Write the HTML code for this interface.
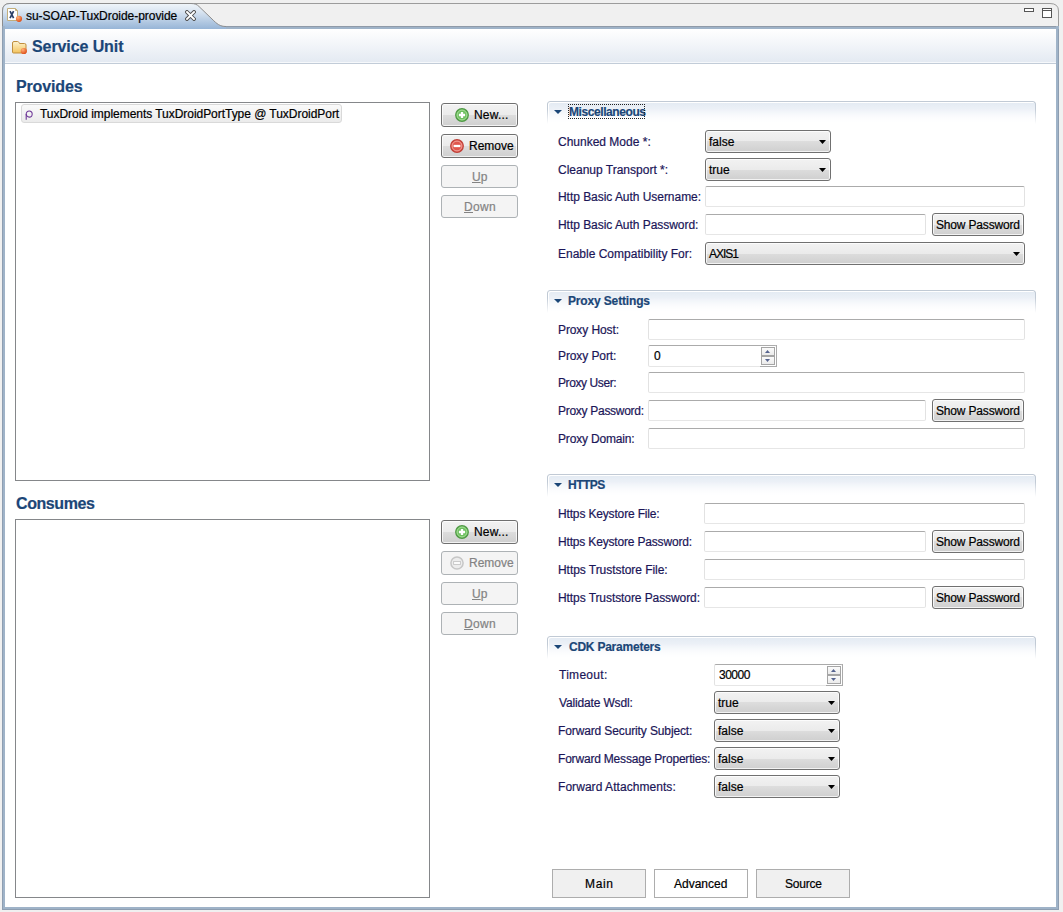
<!DOCTYPE html><html><head><meta charset="utf-8"><style>
html,body{margin:0;padding:0}
body{width:1063px;height:912px;position:relative;overflow:hidden;background:#f0f0f0;font-family:"Liberation Sans",sans-serif}
.t{position:absolute;white-space:nowrap;font-family:"Liberation Sans",sans-serif;-webkit-text-stroke:0.2px currentColor}
</style></head><body>
<div style="position:absolute;left:2px;top:26px;width:1057px;height:884px;box-sizing:border-box;border:3px solid #9fb3c8;background:#fff"></div>
<div style="position:absolute;left:2px;top:29px;width:1px;height:881px;box-sizing:border-box;background:#8e9eb1"></div>
<div style="position:absolute;left:1058px;top:29px;width:1px;height:881px;box-sizing:border-box;background:#8e9eb1"></div>
<div style="position:absolute;left:2px;top:909px;width:1057px;height:1px;box-sizing:border-box;background:#8e9eb1"></div>
<svg style="position:absolute;left:0;top:0" width="1063" height="30">
<defs><linearGradient id="tg" x1="0" y1="0" x2="0" y2="1"><stop offset="0" stop-color="#f0f5fa"/><stop offset="0.3" stop-color="#dbe6f2"/><stop offset="1" stop-color="#97b5d7"/></linearGradient></defs>
<path d="M2.5,26.5V11Q2.5,3.5 10,3.5H1050Q1058.5,3.5 1058.5,11V26.5" fill="#f0f0f0" stroke="#9c9c9c" stroke-width="1"/>
<path d="M2.5,29V11Q2.5,3.5 10,3.5H191C195,3.5 197,4.5 199,6.5L212,19C217,24 220,26.5 226,26.5V29Z" fill="url(#tg)"/>
<path d="M2.5,26V11Q2.5,3.5 10,3.5H191C195,3.5 197,4.5 199,6.5L212,19C217,24 220,26.5 226,26.5" fill="none" stroke="#8d8d8d" stroke-width="1"/>
<path d="M226,26.5H1058" stroke="#8f9aa8" stroke-width="1"/>
</svg>
<div style="position:absolute;left:2px;top:26px;width:3px;height:3px;box-sizing:border-box;background:#9fb3c8"></div>
<div style="position:absolute;left:2px;top:26px;width:1px;height:3px;box-sizing:border-box;background:#8e9eb1"></div>
<div style="position:absolute;left:1056px;top:26px;width:3px;height:3px;box-sizing:border-box;background:#9fb3c8"></div>
<svg style="position:absolute;left:6px;top:7px" width="18" height="17">
<defs><radialGradient id="od1" cx="0.35" cy="0.3" r="0.75"><stop offset="0" stop-color="#ffb27a"/><stop offset="1" stop-color="#dd4a14"/></radialGradient></defs>
<path d="M1.5,1.5H9.5L11.5,3.5V13.5H1.5Z" fill="#fff" stroke="#c2ae7c"/>
<path d="M9.5,1.5V3.5H11.5" fill="none" stroke="#c2ae7c"/>
<path d="M4,4.2L7.6,11.2M7.6,4.2L4,11.2" stroke="#2b3f68" stroke-width="1.7"/>
<circle cx="13" cy="11.8" r="3.1" fill="url(#od1)"/>
</svg>
<div class="t" style="left:26px;top:10px;font-size:12px;line-height:12px;font-weight:400;color:#000;letter-spacing:-0.042px;">su-SOAP-TuxDroide-provide</div>
<svg style="position:absolute;left:185px;top:10px" width="11" height="11">
<path d="M2,2L9,9M9,2L2,9" stroke="#505050" stroke-width="3.8" stroke-linecap="square"/>
<path d="M2,2L9,9M9,2L2,9" stroke="#fff" stroke-width="1.9" stroke-linecap="square"/>
</svg>
<div style="position:absolute;left:1024px;top:8px;width:10px;height:4px;box-sizing:border-box;border:1px solid #555;background:#fff"></div>
<svg style="position:absolute;left:1041px;top:7px" width="13" height="12">
<rect x="1.5" y="1.5" width="9" height="9" fill="#fff" stroke="#555" stroke-width="1"/>
<line x1="1.5" y1="3.5" x2="10.5" y2="3.5" stroke="#555" stroke-width="1"/>
</svg>
<div style="position:absolute;left:5px;top:29px;width:1051px;height:33px;box-sizing:border-box;background:linear-gradient(#ffffff,#e4eaf2)"></div>
<div style="position:absolute;left:5px;top:62px;width:1051px;height:1px;box-sizing:border-box;background:#f6f8fb"></div>
<div style="position:absolute;left:5px;top:63px;width:1051px;height:1px;box-sizing:border-box;background:#c2ccd8"></div>
<svg style="position:absolute;left:11px;top:40px" width="18" height="16">
<defs><linearGradient id="fg" x1="0" y1="0" x2="0" y2="1"><stop offset="0" stop-color="#fdf3cf"/><stop offset="1" stop-color="#f3c35c"/></linearGradient>
<radialGradient id="od2" cx="0.35" cy="0.3" r="0.75"><stop offset="0" stop-color="#ffb27a"/><stop offset="1" stop-color="#dd4a14"/></radialGradient></defs>
<path d="M1.5,3Q1.5,1.5 3,1.5H6.5Q7.5,1.5 8,2.5L8.5,3.5H13.5Q15,3.5 15,5V12Q15,13 14,13H2.5Q1.5,13 1.5,12Z" fill="url(#fg)" stroke="#bf8e3f"/>
<circle cx="12.8" cy="11" r="3.1" fill="url(#od2)"/>
</svg>
<div class="t" style="left:32px;top:39px;font-size:16px;line-height:16px;font-weight:700;color:#1b4677;letter-spacing:-0.091px;">Service Unit</div>
<div class="t" style="left:16px;top:79px;font-size:16px;line-height:16px;font-weight:700;color:#1b4677;letter-spacing:-0.143px;">Provides</div>
<div style="position:absolute;left:15px;top:102px;width:415px;height:379px;box-sizing:border-box;border:1px solid #85878a;background:#fff"></div>
<div style="position:absolute;left:21px;top:104px;width:321px;height:19px;box-sizing:border-box;border:1px solid #d9d9d9;border-radius:3px;background:linear-gradient(#fafafa,#ebebeb)"></div>
<svg style="position:absolute;left:24px;top:109px" width="11" height="12"><ellipse cx="5.2" cy="5" rx="3" ry="3.1" fill="none" stroke="#6e3798" stroke-width="1.05"/><path d="M2.2,5V10.8" stroke="#6e3798" stroke-width="1.1"/></svg>
<div class="t" style="left:40px;top:108px;font-size:12px;line-height:12px;font-weight:400;color:#000;letter-spacing:-0.040px;">TuxDroid implements TuxDroidPortType @ TuxDroidPort</div>
<div style="position:absolute;left:441px;top:103px;width:77px;height:24px;box-sizing:border-box;background:linear-gradient(#f2f2f2 0%,#ebebeb 50%,#dddddd 50%,#cfcfcf 100%);border:1px solid #707070;border-radius:3px;box-shadow:inset 0 0 0 1px rgba(255,255,255,0.75)"></div>
<svg style="position:absolute;left:455px;top:108px" width="15" height="15">
<circle cx="7" cy="7" r="6.3" fill="#6dbf5f" stroke="#4f9845" stroke-width="1.2"/>
<circle cx="7" cy="7" r="4.9" fill="none" stroke="#a6df97" stroke-width="1"/>
<path d="M7,3.9V10.1M3.9,7H10.1" stroke="#fff" stroke-width="2.3"/>
</svg>
<div class="t" style="left:474px;top:109px;font-size:12px;line-height:12px;font-weight:400;color:#000;letter-spacing:0.200px;">New...</div>
<div style="position:absolute;left:441px;top:134px;width:77px;height:24px;box-sizing:border-box;background:linear-gradient(#f2f2f2 0%,#ebebeb 50%,#dddddd 50%,#cfcfcf 100%);border:1px solid #707070;border-radius:3px;box-shadow:inset 0 0 0 1px rgba(255,255,255,0.75)"></div>
<svg style="position:absolute;left:450px;top:139px" width="15" height="15">
<circle cx="7" cy="7" r="6.3" fill="#e0574d" stroke="#bf4038" stroke-width="1.2"/>
<circle cx="7" cy="7" r="4.9" fill="none" stroke="#f3a29b" stroke-width="1"/>
<path d="M3.6,7H10.4" stroke="#fff" stroke-width="2.3"/>
</svg>
<div class="t" style="left:469px;top:140px;font-size:12px;line-height:12px;font-weight:400;color:#000;letter-spacing:0.000px;">Remove</div>
<div style="position:absolute;left:441px;top:165px;width:77px;height:23px;box-sizing:border-box;background:#f4f4f4;border:1px solid #adb2b5;border-radius:3px"></div>
<div class="t" style="left:472px;top:171px;font-size:12px;line-height:12px;font-weight:400;color:#838383;letter-spacing:0.000px;"><u>U</u>p</div>
<div style="position:absolute;left:441px;top:195px;width:77px;height:23px;box-sizing:border-box;background:#f4f4f4;border:1px solid #adb2b5;border-radius:3px"></div>
<div class="t" style="left:464px;top:201px;font-size:12px;line-height:12px;font-weight:400;color:#838383;letter-spacing:0.333px;"><u>D</u>own</div>
<div class="t" style="left:16px;top:496px;font-size:16px;line-height:16px;font-weight:700;color:#1b4677;letter-spacing:-0.429px;">Consumes</div>
<div style="position:absolute;left:15px;top:519px;width:415px;height:379px;box-sizing:border-box;border:1px solid #85878a;background:#fff"></div>
<div style="position:absolute;left:441px;top:520px;width:77px;height:24px;box-sizing:border-box;background:linear-gradient(#f2f2f2 0%,#ebebeb 50%,#dddddd 50%,#cfcfcf 100%);border:1px solid #707070;border-radius:3px;box-shadow:inset 0 0 0 1px rgba(255,255,255,0.75)"></div>
<svg style="position:absolute;left:455px;top:525px" width="15" height="15">
<circle cx="7" cy="7" r="6.3" fill="#6dbf5f" stroke="#4f9845" stroke-width="1.2"/>
<circle cx="7" cy="7" r="4.9" fill="none" stroke="#a6df97" stroke-width="1"/>
<path d="M7,3.9V10.1M3.9,7H10.1" stroke="#fff" stroke-width="2.3"/>
</svg>
<div class="t" style="left:474px;top:526px;font-size:12px;line-height:12px;font-weight:400;color:#000;letter-spacing:0.200px;">New...</div>
<div style="position:absolute;left:441px;top:551px;width:77px;height:24px;box-sizing:border-box;background:#f4f4f4;border:1px solid #adb2b5;border-radius:3px"></div>
<svg style="position:absolute;left:450px;top:556px" width="15" height="15">
<circle cx="7" cy="7" r="6.1" fill="#ececec" stroke="#c6c6c6" stroke-width="1.5"/>
<rect x="3.6" y="5.5" width="6.8" height="3" fill="#fafafa" stroke="#c6c6c6" stroke-width="0.9"/>
</svg>
<div class="t" style="left:469px;top:557px;font-size:12px;line-height:12px;font-weight:400;color:#838383;letter-spacing:0.000px;">Remove</div>
<div style="position:absolute;left:441px;top:582px;width:77px;height:23px;box-sizing:border-box;background:#f4f4f4;border:1px solid #adb2b5;border-radius:3px"></div>
<div class="t" style="left:472px;top:588px;font-size:12px;line-height:12px;font-weight:400;color:#838383;letter-spacing:0.000px;"><u>U</u>p</div>
<div style="position:absolute;left:441px;top:612px;width:77px;height:23px;box-sizing:border-box;background:#f4f4f4;border:1px solid #adb2b5;border-radius:3px"></div>
<div class="t" style="left:464px;top:618px;font-size:12px;line-height:12px;font-weight:400;color:#838383;letter-spacing:0.333px;"><u>D</u>own</div>
<div style="position:absolute;left:547px;top:101px;width:489px;height:23px;box-sizing:border-box;border:1px solid #c1cad5;border-bottom:none;border-radius:3px 3px 0 0;background:linear-gradient(#e3eaf3,#ffffff);box-shadow:inset 1px 1px 0 #fff;-webkit-mask-image:linear-gradient(#000 35%,transparent)"></div>
<svg style="position:absolute;left:554px;top:110px" width="8" height="4"><path d="M0,0H8L4,4Z" fill="#1b4677"/></svg>
<div class="t" style="left:569px;top:106px;font-size:12px;line-height:12px;font-weight:700;color:#1b4677;letter-spacing:-0.417px;">Miscellaneous</div>
<div style="position:absolute;left:568px;top:104px;width:77px;height:15px;box-sizing:border-box;border:1px dotted #222"></div>
<div class="t" style="left:558px;top:136px;font-size:12px;line-height:12px;font-weight:400;color:#1b1658;letter-spacing:0.000px;">Chunked Mode *:</div>
<div style="position:absolute;left:705px;top:130px;width:126px;height:23px;box-sizing:border-box;background:linear-gradient(#f2f2f2 0%,#ebebeb 50%,#dddddd 50%,#cfcfcf 100%);border:1px solid #707070;border-radius:3px;box-shadow:inset 0 0 0 1px rgba(255,255,255,0.75)"></div>
<div class="t" style="left:709px;top:136px;font-size:12px;line-height:12px;font-weight:400;color:#000;">false</div>
<svg style="position:absolute;left:819px;top:140px" width="7" height="4"><path d="M0,0H7L3.5,4Z" fill="#000"/></svg>
<div class="t" style="left:558px;top:164px;font-size:12px;line-height:12px;font-weight:400;color:#1b1658;letter-spacing:0.000px;">Cleanup Transport *:</div>
<div style="position:absolute;left:705px;top:158px;width:126px;height:23px;box-sizing:border-box;background:linear-gradient(#f2f2f2 0%,#ebebeb 50%,#dddddd 50%,#cfcfcf 100%);border:1px solid #707070;border-radius:3px;box-shadow:inset 0 0 0 1px rgba(255,255,255,0.75)"></div>
<div class="t" style="left:709px;top:164px;font-size:12px;line-height:12px;font-weight:400;color:#000;">true</div>
<svg style="position:absolute;left:819px;top:168px" width="7" height="4"><path d="M0,0H7L3.5,4Z" fill="#000"/></svg>
<div class="t" style="left:558px;top:191px;font-size:12px;line-height:12px;font-weight:400;color:#1b1658;letter-spacing:-0.042px;">Http Basic Auth Username:</div>
<div style="position:absolute;left:705px;top:186px;width:320px;height:21px;box-sizing:border-box;background:#fff;border:1px solid #e2e2e2;border-top-color:#ababab;border-bottom-color:#e6e6e6;border-radius:2px"></div>
<div class="t" style="left:558px;top:219px;font-size:12px;line-height:12px;font-weight:400;color:#1b1658;letter-spacing:-0.042px;">Http Basic Auth Password:</div>
<div style="position:absolute;left:705px;top:214px;width:221px;height:21px;box-sizing:border-box;background:#fff;border:1px solid #e2e2e2;border-top-color:#ababab;border-bottom-color:#e6e6e6;border-radius:2px"></div>
<div style="position:absolute;left:932px;top:213px;width:92px;height:23px;box-sizing:border-box;background:linear-gradient(#f2f2f2 0%,#ebebeb 50%,#dddddd 50%,#cfcfcf 100%);border:1px solid #707070;border-radius:3px;box-shadow:inset 0 0 0 1px rgba(255,255,255,0.75)"></div>
<div class="t" style="left:936px;top:219px;font-size:12px;line-height:12px;font-weight:400;color:#000;letter-spacing:-0.167px;">Show Password</div>
<div class="t" style="left:558px;top:248px;font-size:12px;line-height:12px;font-weight:400;color:#1b1658;letter-spacing:0.000px;">Enable Compatibility For:</div>
<div style="position:absolute;left:705px;top:242px;width:320px;height:23px;box-sizing:border-box;background:linear-gradient(#f2f2f2 0%,#ebebeb 50%,#dddddd 50%,#cfcfcf 100%);border:1px solid #707070;border-radius:3px;box-shadow:inset 0 0 0 1px rgba(255,255,255,0.75)"></div>
<div class="t" style="left:709px;top:248px;font-size:12px;line-height:12px;font-weight:400;color:#000;letter-spacing:-1.000px;">AXIS1</div>
<svg style="position:absolute;left:1013px;top:252px" width="7" height="4"><path d="M0,0H7L3.5,4Z" fill="#000"/></svg>
<div style="position:absolute;left:547px;top:290px;width:489px;height:23px;box-sizing:border-box;border:1px solid #c1cad5;border-bottom:none;border-radius:3px 3px 0 0;background:linear-gradient(#e3eaf3,#ffffff);box-shadow:inset 1px 1px 0 #fff;-webkit-mask-image:linear-gradient(#000 35%,transparent)"></div>
<svg style="position:absolute;left:554px;top:299px" width="8" height="4"><path d="M0,0H8L4,4Z" fill="#1b4677"/></svg>
<div class="t" style="left:568px;top:295px;font-size:12px;line-height:12px;font-weight:700;color:#1b4677;letter-spacing:-0.154px;">Proxy Settings</div>
<div class="t" style="left:558px;top:324px;font-size:12px;line-height:12px;font-weight:400;color:#1b1658;letter-spacing:-0.100px;">Proxy Host:</div>
<div style="position:absolute;left:648px;top:319px;width:377px;height:21px;box-sizing:border-box;background:#fff;border:1px solid #e2e2e2;border-top-color:#ababab;border-bottom-color:#e6e6e6;border-radius:2px"></div>
<div class="t" style="left:558px;top:350px;font-size:12px;line-height:12px;font-weight:400;color:#1b1658;letter-spacing:-0.100px;">Proxy Port:</div>
<div style="position:absolute;left:648px;top:345px;width:129px;height:22px;box-sizing:border-box;background:#fff;border:1px solid #e2e2e2;border-top-color:#ababab;border-bottom-color:#e6e6e6;border-radius:2px"></div>
<div class="t" style="left:654px;top:350px;font-size:12px;line-height:12px;font-weight:400;color:#000;">0</div>
<div style="position:absolute;left:776px;top:345px;width:1px;height:22px;box-sizing:border-box;background:#aaaaaa"></div>
<div style="position:absolute;left:760px;top:366px;width:17px;height:1px;box-sizing:border-box;background:#aaaaaa"></div>
<div style="position:absolute;left:761px;top:347px;width:14px;height:9px;box-sizing:border-box;background:linear-gradient(#fbfbfb,#ebebeb);border:1px solid #a5a5a5"></div>
<div style="position:absolute;left:761px;top:356px;width:14px;height:9px;box-sizing:border-box;background:linear-gradient(#fbfbfb,#ebebeb);border:1px solid #a5a5a5"></div>
<svg style="position:absolute;left:765px;top:350px" width="5" height="3"><path d="M0,3H5L2.5,0Z" fill="#56648f"/></svg>
<svg style="position:absolute;left:765px;top:359px" width="5" height="3"><path d="M0,0H5L2.5,3Z" fill="#56648f"/></svg>
<div class="t" style="left:558px;top:377px;font-size:12px;line-height:12px;font-weight:400;color:#1b1658;letter-spacing:-0.400px;">Proxy User:</div>
<div style="position:absolute;left:648px;top:372px;width:377px;height:21px;box-sizing:border-box;background:#fff;border:1px solid #e2e2e2;border-top-color:#ababab;border-bottom-color:#e6e6e6;border-radius:2px"></div>
<div class="t" style="left:558px;top:405px;font-size:12px;line-height:12px;font-weight:400;color:#1b1658;letter-spacing:-0.286px;">Proxy Password:</div>
<div style="position:absolute;left:648px;top:400px;width:278px;height:21px;box-sizing:border-box;background:#fff;border:1px solid #e2e2e2;border-top-color:#ababab;border-bottom-color:#e6e6e6;border-radius:2px"></div>
<div style="position:absolute;left:932px;top:399px;width:92px;height:23px;box-sizing:border-box;background:linear-gradient(#f2f2f2 0%,#ebebeb 50%,#dddddd 50%,#cfcfcf 100%);border:1px solid #707070;border-radius:3px;box-shadow:inset 0 0 0 1px rgba(255,255,255,0.75)"></div>
<div class="t" style="left:936px;top:405px;font-size:12px;line-height:12px;font-weight:400;color:#000;letter-spacing:-0.167px;">Show Password</div>
<div class="t" style="left:558px;top:433px;font-size:12px;line-height:12px;font-weight:400;color:#1b1658;letter-spacing:-0.167px;">Proxy Domain:</div>
<div style="position:absolute;left:648px;top:428px;width:377px;height:21px;box-sizing:border-box;background:#fff;border:1px solid #e2e2e2;border-top-color:#ababab;border-bottom-color:#e6e6e6;border-radius:2px"></div>
<div style="position:absolute;left:547px;top:474px;width:489px;height:23px;box-sizing:border-box;border:1px solid #c1cad5;border-bottom:none;border-radius:3px 3px 0 0;background:linear-gradient(#e3eaf3,#ffffff);box-shadow:inset 1px 1px 0 #fff;-webkit-mask-image:linear-gradient(#000 35%,transparent)"></div>
<svg style="position:absolute;left:554px;top:483px" width="8" height="4"><path d="M0,0H8L4,4Z" fill="#1b4677"/></svg>
<div class="t" style="left:568px;top:479px;font-size:12px;line-height:12px;font-weight:700;color:#1b4677;letter-spacing:-0.500px;">HTTPS</div>
<div class="t" style="left:558px;top:508px;font-size:12px;line-height:12px;font-weight:400;color:#1b1658;letter-spacing:-0.158px;">Https Keystore File:</div>
<div style="position:absolute;left:704px;top:503px;width:321px;height:21px;box-sizing:border-box;background:#fff;border:1px solid #e2e2e2;border-top-color:#ababab;border-bottom-color:#e6e6e6;border-radius:2px"></div>
<div class="t" style="left:558px;top:536px;font-size:12px;line-height:12px;font-weight:400;color:#1b1658;letter-spacing:-0.174px;">Https Keystore Password:</div>
<div style="position:absolute;left:704px;top:531px;width:222px;height:21px;box-sizing:border-box;background:#fff;border:1px solid #e2e2e2;border-top-color:#ababab;border-bottom-color:#e6e6e6;border-radius:2px"></div>
<div style="position:absolute;left:932px;top:530px;width:92px;height:23px;box-sizing:border-box;background:linear-gradient(#f2f2f2 0%,#ebebeb 50%,#dddddd 50%,#cfcfcf 100%);border:1px solid #707070;border-radius:3px;box-shadow:inset 0 0 0 1px rgba(255,255,255,0.75)"></div>
<div class="t" style="left:936px;top:536px;font-size:12px;line-height:12px;font-weight:400;color:#000;letter-spacing:-0.167px;">Show Password</div>
<div class="t" style="left:558px;top:564px;font-size:12px;line-height:12px;font-weight:400;color:#1b1658;letter-spacing:-0.048px;">Https Truststore File:</div>
<div style="position:absolute;left:704px;top:559px;width:321px;height:21px;box-sizing:border-box;background:#fff;border:1px solid #e2e2e2;border-top-color:#ababab;border-bottom-color:#e6e6e6;border-radius:2px"></div>
<div class="t" style="left:558px;top:592px;font-size:12px;line-height:12px;font-weight:400;color:#1b1658;letter-spacing:-0.080px;">Https Truststore Password:</div>
<div style="position:absolute;left:704px;top:587px;width:222px;height:21px;box-sizing:border-box;background:#fff;border:1px solid #e2e2e2;border-top-color:#ababab;border-bottom-color:#e6e6e6;border-radius:2px"></div>
<div style="position:absolute;left:932px;top:586px;width:92px;height:23px;box-sizing:border-box;background:linear-gradient(#f2f2f2 0%,#ebebeb 50%,#dddddd 50%,#cfcfcf 100%);border:1px solid #707070;border-radius:3px;box-shadow:inset 0 0 0 1px rgba(255,255,255,0.75)"></div>
<div class="t" style="left:936px;top:592px;font-size:12px;line-height:12px;font-weight:400;color:#000;letter-spacing:-0.167px;">Show Password</div>
<div style="position:absolute;left:547px;top:636px;width:489px;height:23px;box-sizing:border-box;border:1px solid #c1cad5;border-bottom:none;border-radius:3px 3px 0 0;background:linear-gradient(#e3eaf3,#ffffff);box-shadow:inset 1px 1px 0 #fff;-webkit-mask-image:linear-gradient(#000 35%,transparent)"></div>
<svg style="position:absolute;left:554px;top:645px" width="8" height="4"><path d="M0,0H8L4,4Z" fill="#1b4677"/></svg>
<div class="t" style="left:569px;top:641px;font-size:12px;line-height:12px;font-weight:700;color:#1b4677;letter-spacing:-0.231px;">CDK Parameters</div>
<div class="t" style="left:559px;top:669px;font-size:12px;line-height:12px;font-weight:400;color:#1b1658;letter-spacing:0.286px;">Timeout:</div>
<div style="position:absolute;left:714px;top:664px;width:129px;height:22px;box-sizing:border-box;background:#fff;border:1px solid #e2e2e2;border-top-color:#ababab;border-bottom-color:#e6e6e6;border-radius:2px"></div>
<div class="t" style="left:719px;top:669px;font-size:12px;line-height:12px;font-weight:400;color:#000;letter-spacing:-0.500px;">30000</div>
<div style="position:absolute;left:842px;top:664px;width:1px;height:22px;box-sizing:border-box;background:#aaaaaa"></div>
<div style="position:absolute;left:826px;top:685px;width:17px;height:1px;box-sizing:border-box;background:#aaaaaa"></div>
<div style="position:absolute;left:827px;top:666px;width:14px;height:9px;box-sizing:border-box;background:linear-gradient(#fbfbfb,#ebebeb);border:1px solid #a5a5a5"></div>
<div style="position:absolute;left:827px;top:675px;width:14px;height:9px;box-sizing:border-box;background:linear-gradient(#fbfbfb,#ebebeb);border:1px solid #a5a5a5"></div>
<svg style="position:absolute;left:831px;top:669px" width="5" height="3"><path d="M0,3H5L2.5,0Z" fill="#56648f"/></svg>
<svg style="position:absolute;left:831px;top:678px" width="5" height="3"><path d="M0,0H5L2.5,3Z" fill="#56648f"/></svg>
<div class="t" style="left:559px;top:697px;font-size:12px;line-height:12px;font-weight:400;color:#1b1658;letter-spacing:-0.154px;">Validate Wsdl:</div>
<div style="position:absolute;left:714px;top:691px;width:126px;height:23px;box-sizing:border-box;background:linear-gradient(#f2f2f2 0%,#ebebeb 50%,#dddddd 50%,#cfcfcf 100%);border:1px solid #707070;border-radius:3px;box-shadow:inset 0 0 0 1px rgba(255,255,255,0.75)"></div>
<div class="t" style="left:718px;top:697px;font-size:12px;line-height:12px;font-weight:400;color:#000;">true</div>
<svg style="position:absolute;left:828px;top:701px" width="7" height="4"><path d="M0,0H7L3.5,4Z" fill="#000"/></svg>
<div class="t" style="left:558px;top:725px;font-size:12px;line-height:12px;font-weight:400;color:#1b1658;letter-spacing:-0.125px;">Forward Security Subject:</div>
<div style="position:absolute;left:714px;top:719px;width:126px;height:23px;box-sizing:border-box;background:linear-gradient(#f2f2f2 0%,#ebebeb 50%,#dddddd 50%,#cfcfcf 100%);border:1px solid #707070;border-radius:3px;box-shadow:inset 0 0 0 1px rgba(255,255,255,0.75)"></div>
<div class="t" style="left:718px;top:725px;font-size:12px;line-height:12px;font-weight:400;color:#000;">false</div>
<svg style="position:absolute;left:828px;top:729px" width="7" height="4"><path d="M0,0H7L3.5,4Z" fill="#000"/></svg>
<div class="t" style="left:558px;top:753px;font-size:12px;line-height:12px;font-weight:400;color:#1b1658;letter-spacing:-0.192px;">Forward Message Properties:</div>
<div style="position:absolute;left:714px;top:747px;width:126px;height:23px;box-sizing:border-box;background:linear-gradient(#f2f2f2 0%,#ebebeb 50%,#dddddd 50%,#cfcfcf 100%);border:1px solid #707070;border-radius:3px;box-shadow:inset 0 0 0 1px rgba(255,255,255,0.75)"></div>
<div class="t" style="left:718px;top:753px;font-size:12px;line-height:12px;font-weight:400;color:#000;">false</div>
<svg style="position:absolute;left:828px;top:757px" width="7" height="4"><path d="M0,0H7L3.5,4Z" fill="#000"/></svg>
<div class="t" style="left:558px;top:781px;font-size:12px;line-height:12px;font-weight:400;color:#1b1658;letter-spacing:0.053px;">Forward Attachments:</div>
<div style="position:absolute;left:714px;top:775px;width:126px;height:23px;box-sizing:border-box;background:linear-gradient(#f2f2f2 0%,#ebebeb 50%,#dddddd 50%,#cfcfcf 100%);border:1px solid #707070;border-radius:3px;box-shadow:inset 0 0 0 1px rgba(255,255,255,0.75)"></div>
<div class="t" style="left:718px;top:781px;font-size:12px;line-height:12px;font-weight:400;color:#000;">false</div>
<svg style="position:absolute;left:828px;top:785px" width="7" height="4"><path d="M0,0H7L3.5,4Z" fill="#000"/></svg>
<div style="position:absolute;left:552px;top:869px;width:94px;height:29px;box-sizing:border-box;border:1px solid #adadad;background:#f0f0f0"></div>
<div style="position:absolute;left:654px;top:869px;width:94px;height:29px;box-sizing:border-box;border:1px solid #adadad;background:#fff"></div>
<div style="position:absolute;left:756px;top:869px;width:94px;height:29px;box-sizing:border-box;border:1px solid #adadad;background:#f0f0f0"></div>
<div class="t" style="left:585px;top:878px;font-size:12px;line-height:12px;font-weight:400;color:#000;letter-spacing:0.667px;">Main</div>
<div class="t" style="left:674px;top:878px;font-size:12px;line-height:12px;font-weight:400;color:#000;letter-spacing:0.000px;">Advanced</div>
<div class="t" style="left:785px;top:878px;font-size:12px;line-height:12px;font-weight:400;color:#000;letter-spacing:-0.200px;">Source</div>
</body></html>
